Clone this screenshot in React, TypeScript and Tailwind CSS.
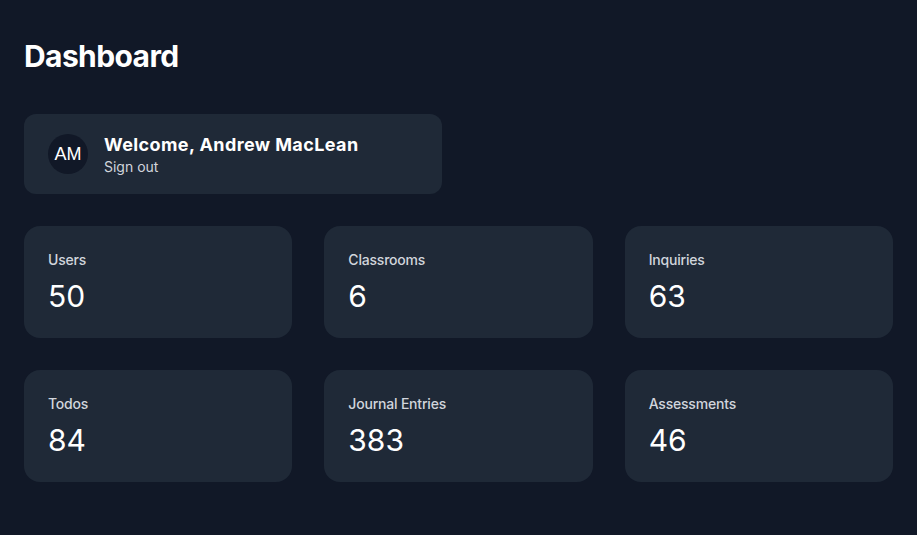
import React from "react";

const stats = [
  { label: "Users", value: "50" },
  { label: "Classrooms", value: "6" },
  { label: "Inquiries", value: "63" },
  { label: "Todos", value: "84" },
  { label: "Journal Entries", value: "383" },
  { label: "Assessments", value: "46" },
];

export default function App() {
  return (
    <div
      className="min-h-screen w-full bg-[#111827] text-white px-6 pt-[38px] pb-6"
      style={{ fontFamily: "Inter, 'Noto Sans', sans-serif" }}
    >
      <h1 className="text-3xl leading-9 font-bold tracking-[-0.6px] mb-10">Dashboard</h1>

      <div className="w-[418px] h-20 bg-[#1f2937] rounded-xl px-6 flex items-center gap-4 mb-8">
        <div
          className="w-10 h-10 rounded-full bg-[#111827] flex items-center justify-center text-lg text-white"
          style={{ fontFamily: "'Liberation Sans', Arial, sans-serif" }}
        >
          AM
        </div>
        <div className="flex flex-col pt-[2px]">
          <div className="text-lg leading-6 font-bold tracking-[0.4px]">Welcome, Andrew MacLean</div>
          <div className="text-sm leading-5 text-gray-300">Sign out</div>
        </div>
      </div>

      <div className="grid grid-cols-3 gap-8">
        {stats.map((s) => (
          <div key={s.label} className="bg-[#1f2937] rounded-2xl p-6">
            <div className="text-sm leading-5 font-medium text-gray-300 tracking-[-0.2px]">{s.label}</div>
            <div className="mt-2 text-3xl leading-9 font-normal text-white">{s.value}</div>
          </div>
        ))}
      </div>
    </div>
  );
}
